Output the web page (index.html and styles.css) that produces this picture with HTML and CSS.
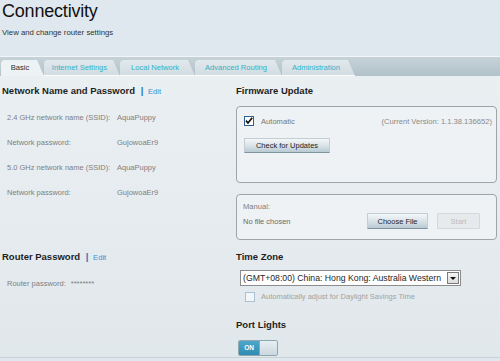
FILE: index.html
```html
<!DOCTYPE html>
<html>
<head>
    <meta charset="utf-8" />
    <title>Connectivity</title>
    <link rel="stylesheet" href="styles.css">
</head>
<body>
    <div class="page-head">
        <h1 class="page-title">Connectivity</h1>
        <p class="page-sub">View and change router settings</p>
    </div>

    <div class="tab-strip">
        <div class="tab tab-active tab-basic">Basic</div>
        <div class="tab tab-internet">Internet Settings</div>
        <div class="tab tab-local">Local Network</div>
        <div class="tab tab-routing">Advanced Routing</div>
        <div class="tab tab-admin">Administration</div>
    </div>

    <div class="content-grid">
        <div class="section">
            <div class="section-title">Network Name and Password <span class="sep">|</span> <span class="edit-link">Edit</span></div>
            <div class="info-row"><span class="info-label">2.4 GHz network name (SSID):</span><span class="info-value">AquaPuppy</span></div>
            <div class="info-row"><span class="info-label">Network password:</span><span class="info-value">GujowoaEr9</span></div>
            <div class="info-row"><span class="info-label">5.0 GHz network name (SSID):</span><span class="info-value">AquaPuppy</span></div>
            <div class="info-row"><span class="info-label">Network password:</span><span class="info-value">GujowoaEr9</span></div>
        </div>

        <div class="section">
            <div class="section-title">Firmware Update</div>
            <div class="panel panel-auto">
                <div class="auto-row">
                    <svg class="check-box" width="10" height="10" viewBox="0 0 10 10">
                        <rect x="0.5" y="0.5" width="9" height="9" fill="#fff" stroke="#2f5f8f" />
                        <path d="M2 4.6 L4 7 L8.2 1.8" fill="none" stroke="#111" stroke-width="1.7" />
                    </svg>
                    <span class="auto-label">Automatic</span>
                    <span class="version-text">(Current Version: 1.1.38.136652)</span>
                </div>
                <button class="soft-button check-button">Check for Updates</button>
            </div>
            <div class="panel panel-manual">
                <div class="manual-label">Manual:</div>
                <div class="manual-row">
                    <span class="file-name">No file chosen</span>
                    <button class="soft-button choose-button">Choose File</button>
                    <button class="soft-button start-button">Start</button>
                </div>
            </div>
        </div>

        <div class="section">
            <div class="section-title">Router Password <span class="sep">|</span> <span class="edit-link">Edit</span></div>
            <div class="info-row"><span class="pass-label">Router password:</span><span class="info-value">********</span></div>
        </div>

        <div class="section">
            <div class="section-title">Time Zone</div>
            <div class="zone-select">
                <span class="zone-text">(GMT+08:00) China: Hong Kong: Australia Western</span>
                <span class="zone-arrow"></span>
            </div>
            <div class="dst-row">
                <span class="empty-box"></span>
                <span class="dst-label">Automatically adjust for Daylight Savings Time</span>
            </div>
            <div class="section-title lights-title">Port Lights</div>
            <div class="toggle">
                <span class="toggle-on">ON</span>
                <span class="toggle-knob"></span>
            </div>
        </div>
    </div>
</body>
</html>
```

FILE: styles.css
```css
body {
    margin: 0;
    height: 361px;
    overflow: hidden;
    background-color: #dfe8ee;
    font-family: "Liberation Sans", Arial, sans-serif;
    color: #1e1e1e;
}

.page-head {
    padding-left: 2px;
    height: 56px;
}

.page-title {
    margin: 0;
    padding-top: 1px;
    font-size: 18px;
    line-height: 20px;
    font-weight: normal;
    letter-spacing: -0.2px;
    color: #111;
}

.page-sub {
    margin: 7px 0 0 0;
    font-size: 7.8px;
    line-height: 10px;
    color: #333;
}

.tab-strip {
    display: flex;
    height: 16px;
    padding: 3px 0 0 1px;
    border-top: 1px solid #f2f5f7;
    background: linear-gradient(#c6d2d8, #b2c2ca);
}

.tab {
    box-sizing: border-box;
    height: 16px;
    padding-right: 5px;
    text-align: center;
    font-size: 7.6px;
    line-height: 15px;
    color: #2fb3c9;
    background: linear-gradient(#e2e9ed, #d2dce1);
    border-bottom: 1px solid #fbfdfd;
    border-radius: 4px 0 0 0;
    clip-path: polygon(0 0, calc(100% - 7px) 0, 100% 100%, 0 100%);
}

.tab-active {
    color: #2a2a2a;
    background: #edf2f4;
    border-bottom-color: #edf2f4;
}

.tab-basic { width: 43px; }
.tab-internet { width: 76px; }
.tab-local { width: 75px; }
.tab-routing { width: 87px; }
.tab-admin { width: 73px; }

.content-grid {
    display: grid;
    grid-template-columns: 234px 261px;
    row-gap: 9px;
    height: 272px;
    padding: 9px 3px 0 2px;
    background: linear-gradient(#eaeff2, #e1e8ec);
    border-bottom: 1px solid #c9d2d7;
}

.section-title {
    font-size: 9.5px;
    line-height: 12px;
    font-weight: bold;
    color: #1e1e1e;
}

.sep {
    margin-left: 3px;
    color: #2c74b0;
}

.edit-link {
    margin-left: 2px;
    font-size: 7.6px;
    font-weight: normal;
    color: #3a8fd0;
}

.info-row {
    display: flex;
    padding-left: 5px;
    font-size: 7.5px;
    line-height: 25px;
    color: #7f7f7f;
}

.section-title + .info-row {
    margin-top: 7px;
}

.info-label {
    width: 110px;
}

.pass-label {
    margin-right: 5px;
}

.panel {
    box-sizing: border-box;
    border: 1px solid #9ea4a8;
    border-radius: 4px;
    background-color: #eef2f4;
}

.panel-auto {
    height: 77px;
    margin-top: 9px;
    padding: 8px 4px 0 7px;
}

.auto-row {
    display: flex;
    align-items: center;
    height: 12px;
    font-size: 7.6px;
    color: #808080;
}

.auto-label {
    margin-left: 7px;
    color: #777;
}

.version-text {
    margin-left: auto;
    color: #8a8a8a;
}

.soft-button {
    box-sizing: border-box;
    height: 16px;
    padding: 0;
    font-family: "Liberation Sans", Arial, sans-serif;
    font-size: 7.5px;
    color: #1e1e1e;
    background: linear-gradient(#f4f7f8, #d6e1e6 55%, #b9cad2);
    border: 1px solid #c3ced4;
    border-bottom-color: #7f939d;
    border-radius: 1px;
}

.check-button {
    display: block;
    width: 86px;
    height: 15px;
    margin-top: 11px;
}

.panel-manual {
    height: 46px;
    margin-top: 11px;
    padding: 7px 6px 0 6px;
}

.manual-label {
    font-size: 7.6px;
    line-height: 10px;
    color: #7d7d7d;
}

.manual-row {
    display: flex;
    align-items: center;
    margin-top: 1px;
    height: 16px;
}

.file-name {
    width: 124px;
    font-size: 7.5px;
    color: #6a6a6a;
}

.choose-button {
    width: 61px;
}

.start-button {
    width: 43px;
    margin-left: 9px;
    color: #b9bdbf;
    background: #e6eaec;
    border: 1px solid #d2d8db;
}

.zone-select {
    box-sizing: border-box;
    display: flex;
    align-items: center;
    width: 221px;
    height: 16px;
    margin: 7px 0 0 4px;
    padding: 0 1px 0 2px;
    background-color: #fff;
    border: 1px solid #8c8c8c;
}

.zone-text {
    flex: 1;
    font-size: 8.7px;
    color: #1e1e1e;
    white-space: nowrap;
}

.zone-arrow {
    position: relative;
    box-sizing: border-box;
    width: 12px;
    height: 12px;
    background: linear-gradient(#f5f5f5, #dcdcdc);
    border: 1px solid #7b7b7b;
}

.zone-arrow::after {
    content: "";
    position: absolute;
    left: 2px;
    top: 4px;
    border-left: 3px solid transparent;
    border-right: 3px solid transparent;
    border-top: 3px solid #111;
}

.dst-row {
    display: flex;
    align-items: center;
    height: 12px;
    margin: 5px 0 0 9px;
}

.empty-box {
    box-sizing: border-box;
    width: 10px;
    height: 10px;
    background-color: #f3f6f8;
    border: 1px solid #a9c2d3;
}

.dst-label {
    margin-left: 6px;
    font-size: 7.5px;
    color: #a2a2a2;
}

.lights-title {
    margin-top: 16px;
}

.toggle {
    display: flex;
    box-sizing: border-box;
    width: 40px;
    height: 16px;
    margin: 9px 0 0 2px;
    border: 1px solid #8ea6b2;
    border-radius: 2px;
    overflow: hidden;
}

.toggle-on {
    width: 20px;
    font-size: 6.5px;
    line-height: 14px;
    font-weight: bold;
    text-align: center;
    color: #fff;
    background: linear-gradient(#4fa8cb, #2f8ab2);
}

.toggle-knob {
    flex: 1;
    background: linear-gradient(#e6eef2, #cbd8df);
    border-left: 1px solid #8ea6b2;
}
```
